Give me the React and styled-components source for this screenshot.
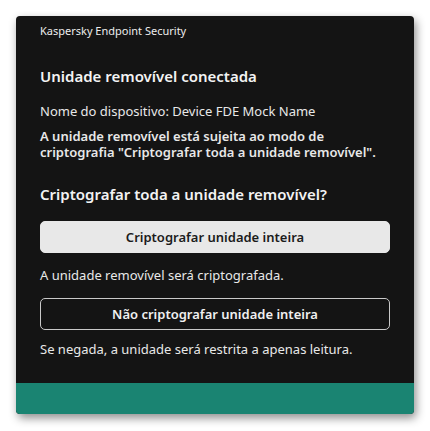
import React from "react";
import styled, { createGlobalStyle } from "styled-components";

const GlobalStyle = createGlobalStyle`
  html, body { margin: 0; padding: 0; background: #ffffff; }
  body { font-family: "Noto Sans", "Open Sans", sans-serif; }
`;

const Page = styled.div`
  width: 430px;
  height: 431px;
  padding: 16px;
  box-sizing: border-box;
`;

const Dialog = styled.div`
  width: 398px;
  height: 398px;
  background: #141414;
  border-radius: 4px;
  box-shadow: 2px 4px 10px rgba(0, 0, 0, 0.45);
  display: flex;
  flex-direction: column;
  overflow: hidden;
  color: #f0f0f0;
`;

const TitleBar = styled.div`
  height: 32px;
  padding: 7px 24px 0;
  box-sizing: border-box;
  font-size: 11px;
  line-height: 16px;
  color: #ededed;
`;

const Body = styled.div`
  flex: 1;
  padding: 18px 24px 0;
  display: flex;
  flex-direction: column;
`;

const Heading = styled.div`
  font-size: 15px;
  font-weight: 600;
  line-height: 20px;
  color: #f3f3f3;
  margin-top: ${(p) => p.$mt || 0}px;
`;

const Text = styled.div`
  font-size: 13px;
  line-height: 16px;
  font-weight: ${(p) => (p.$bold ? 600 : 400)};
  color: #e8e8e8;
  margin-top: ${(p) => p.$mt || 0}px;
`;

const Button = styled.button`
  display: flex;
  align-items: center;
  justify-content: center;
  height: 32px;
  width: 100%;
  box-sizing: border-box;
  border-radius: 5px;
  font-family: inherit;
  font-size: 13px;
  font-weight: 600;
  padding: 0 12px;
  margin-top: ${(p) => p.$mt || 0}px;
  cursor: pointer;
  background: ${(p) => (p.$primary ? "#e8e8e8" : "transparent")};
  color: ${(p) => (p.$primary ? "#1b1b1b" : "#f0f0f0")};
  border: 1px solid ${(p) => (p.$primary ? "#e8e8e8" : "#c9c9c9")};
`;

const Footer = styled.div`
  height: 31px;
  background: #1a8472;
`;

export default function App() {
  return (
    <>
      <GlobalStyle />
      <Page>
        <Dialog>
          <TitleBar>Kaspersky Endpoint Security</TitleBar>
          <Body>
            <Heading>Unidade removível conectada</Heading>
            <Text $mt={17}>Nome do dispositivo: Device FDE Mock Name</Text>
            <Text $bold $mt={9}>
              A unidade removível está sujeita ao modo de criptografia "Criptografar toda a unidade removível".
            </Text>
            <Heading $mt={24}>Criptografar toda a unidade removível?</Heading>
            <Button $primary $mt={17}>Criptografar unidade inteira</Button>
            <Text $mt={14}>A unidade removível será criptografada.</Text>
            <Button $mt={15}>Não criptografar unidade inteira</Button>
            <Text $mt={11}>Se negada, a unidade será restrita a apenas leitura.</Text>
          </Body>
          <Footer />
        </Dialog>
      </Page>
    </>
  );
}
